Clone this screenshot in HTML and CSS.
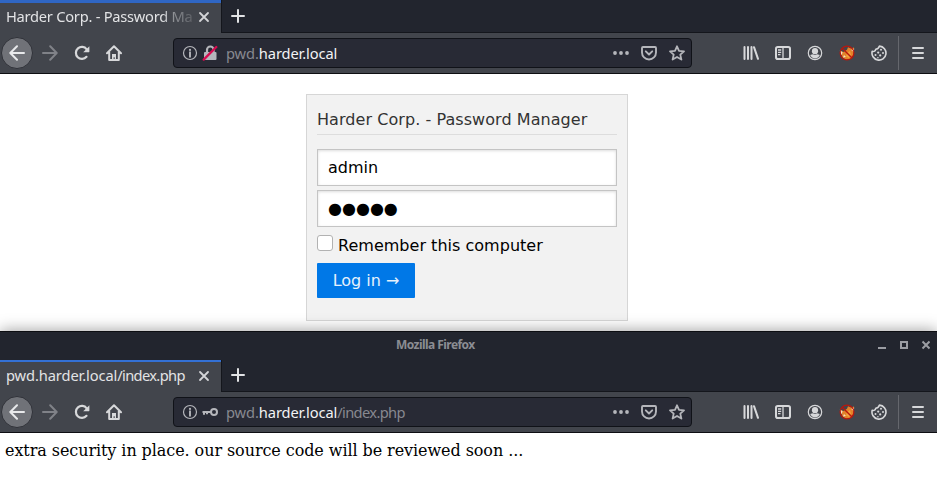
FILE: index.html
```html
<!DOCTYPE html>
<html lang="en">
<head>
<meta charset="utf-8">
<title>Harder Corp. - Password Manager</title>
<link rel="stylesheet" href="styles.css">
</head>
<body>
<svg class="sprite" aria-hidden="true">
  <symbol id="back" viewBox="0 0 16 16"><path d="M15 8H1.5M8 1.3 1.3 8 8 14.7" fill="none" stroke="currentColor" stroke-width="2" stroke-linecap="round" stroke-linejoin="round"/></symbol>
  <symbol id="forward" viewBox="0 0 16 16"><path d="M1 8h13.5M8.200 1.300 14.700 8 8.200 14.700" fill="none" stroke="currentColor" stroke-width="2" stroke-linecap="round" stroke-linejoin="round"/></symbol>
  <symbol id="reload" viewBox="0 0 16 16"><path d="M12.500 11.800A6 6 0 1 1 12.700 4.300" fill="none" stroke="currentColor" stroke-width="2.200" stroke-linecap="round"/><path d="M15.400 1.200v5.400a.6.6 0 0 1-.6.600H9.200z" fill="currentColor"/></symbol>
  <symbol id="home" viewBox="0 0 16 16"><path d="M1 8.300 8 1.300l7 7M3.200 7v8h9.600V7" fill="none" stroke="currentColor" stroke-width="2" stroke-linecap="round" stroke-linejoin="round"/><path d="M6 9h4v5H8.700v-1.700H7.600V14H6z" fill="currentColor"/></symbol>
  <symbol id="info" viewBox="0 0 16 16"><circle cx="8" cy="8" r="6.500" fill="none" stroke="currentColor" stroke-width="1.200"/><circle cx="8" cy="4.900" r="1.100" fill="currentColor"/><path d="M8 7.200v4.500" stroke="currentColor" stroke-width="1.900" stroke-linecap="round"/></symbol>
  <symbol id="lock" viewBox="0 0 16 16"><path d="M5 8V4.800a3.300 3.300 0 0 1 6.600 0V8" fill="none" stroke="currentColor" stroke-width="2.200"/><rect x="2" y="7" width="12.500" height="8" rx="1" fill="currentColor"/><path d="M1.700 14.600 14.300 2" stroke="#d70b50" stroke-width="2.300" stroke-linecap="round"/></symbol>
  <symbol id="key" viewBox="0 0 16 16"><circle cx="12" cy="8" r="3" fill="none" stroke="currentColor" stroke-width="2"/><path d="M9 8H.5M2 8v2.700M5 8v2.200" fill="none" stroke="currentColor" stroke-width="2"/></symbol>
  <symbol id="dots" viewBox="0 0 16 16"><g fill="currentColor"><circle cx="2" cy="8" r="1.900"/><circle cx="8" cy="8" r="1.900"/><circle cx="14" cy="8" r="1.900"/></g></symbol>
  <symbol id="pocket" viewBox="0 0 16 16"><path d="M2 2h12q1 0 1 1v4.500a7 7 0 0 1-14 0V3q0-1 1-1zM4.800 6.300 8 9.500l3.200-3.200" fill="none" stroke="currentColor" stroke-width="1.900" stroke-linecap="round" stroke-linejoin="round"/></symbol>
  <symbol id="star" viewBox="0 0 16 16"><path d="m8 1.300 2 4.500 5 .500-3.700 3.300 1.100 5L8 12l-4.400 2.600 1.100-5L1 6.300l5-.5z" fill="none" stroke="currentColor" stroke-width="1.800" stroke-linejoin="round"/></symbol>
  <symbol id="library" viewBox="0 0 16 16"><path d="M1.500 2v12M5 2v12M8.500 2v12M11 2.200l4 11.600" fill="none" stroke="currentColor" stroke-width="2" stroke-linecap="round"/></symbol>
  <symbol id="sidebar" viewBox="0 0 16 16"><rect x="1" y="2" width="14" height="12" rx="1.800" fill="none" stroke="currentColor" stroke-width="2"/><path d="M8 2v12M3 5h3.200M3 7.300h3.200M3 9.600h2.500" fill="none" stroke="currentColor" stroke-width="1.300"/></symbol>
  <symbol id="account" viewBox="0 0 16 16"><circle cx="8" cy="8" r="6.700" fill="none" stroke="currentColor" stroke-width="1.200"/><circle cx="8" cy="6.200" r="3.100" fill="currentColor"/><path d="M3.200 10q1.800-.7 2.800-.7 2 1.400 4 0 1 0 2.800.7-1.500 3.400-4.800 3.400T3.200 10z" fill="currentColor"/></symbol>
  <symbol id="fox" viewBox="0 0 16 16"><path d="M1 5.500 4.500 7 8 4.800l1-2.500 3 1.200 3-1-.5 7-2.300 4-5 1.200-3.700-2.400z" fill="#e3822a"/><path d="m.8 5.500 2.800 1.700-1 3zM15.200 3.500l-3 1.500 2.600 2zM5 10l2 2-3 .4z" fill="#f6dfc0"/><path d="m8 8 3-2 1 4-2 3-3-1.500z" fill="#f5a33c"/><circle cx="8" cy="8" r="6.900" fill="none" stroke="#b9160d" stroke-width="1.200"/><path d="m3.200 3.200 9.600 9.600" stroke="#b9160d" stroke-width="1.400"/></symbol>
  <symbol id="cookie" viewBox="0 0 16 16"><path d="M8.500 1.100a7 7 0 1 1-7.300 5.200q3 .700 3.500-2 2.800-.2 3.800-3.200z" fill="none" stroke="currentColor" stroke-width="1.600" stroke-linejoin="round"/><g fill="currentColor"><circle cx="10" cy="4.800" r="1"/><circle cx="7.200" cy="7.600" r="1.100"/><circle cx="12" cy="8" r="1"/><circle cx="4.500" cy="10" r="1"/><circle cx="9.200" cy="10.400" r="1.100"/><circle cx="6.900" cy="12.700" r=".8"/></g></symbol>
  <symbol id="menu" viewBox="0 0 16 16"><path d="M3 3h10M3 8h10M3 13h10" stroke="currentColor" stroke-width="2" stroke-linecap="round"/></symbol>
  <symbol id="close" viewBox="0 0 16 16"><path d="m4 4 8 8m0-8-8 8" stroke="currentColor" stroke-width="1.800" stroke-linecap="round"/></symbol>
  <symbol id="plus" viewBox="0 0 16 16"><path d="M8 2v12M2 8h12" stroke="currentColor" stroke-width="2" stroke-linecap="round"/></symbol>
</svg>

<section class="window window-login">
  <div class="tabs">
    <div class="tab"><span class="tab-title fade">Harder Corp. - Password Ma</span><svg class="icon"><use href="#close"/></svg></div>
    <div class="new-tab"><svg class="icon"><use href="#plus"/></svg></div>
  </div>
  <div class="toolbar">
    <div class="btn back"><svg class="icon"><use href="#back"/></svg></div>
    <div class="btn disabled"><svg class="icon"><use href="#forward"/></svg></div>
    <div class="btn"><svg class="icon"><use href="#reload"/></svg></div>
    <div class="btn"><svg class="icon"><use href="#home"/></svg></div>
    <div class="urlbar">
      <svg class="icon"><use href="#info"/></svg><svg class="icon lock"><use href="#lock"/></svg>
      <span class="url">pwd.<b>harder.local</b></span>
      <div class="act"><svg class="icon"><use href="#dots"/></svg></div>
      <div class="act"><svg class="icon"><use href="#pocket"/></svg></div>
      <div class="act"><svg class="icon"><use href="#star"/></svg></div>
    </div>
    <div class="tools">
      <div class="btn"><svg class="icon"><use href="#library"/></svg></div>
      <div class="btn"><svg class="icon"><use href="#sidebar"/></svg></div>
      <div class="btn"><svg class="icon"><use href="#account"/></svg></div>
      <div class="btn"><svg class="icon"><use href="#fox"/></svg></div>
      <div class="btn"><svg class="icon"><use href="#cookie"/></svg></div>
      <div class="sep"></div>
      <div class="btn"><svg class="icon"><use href="#menu"/></svg></div>
    </div>
  </div>
  <main class="page">
    <form class="login">
      <h1>Harder Corp. - Password Manager</h1>
      <input class="field" type="text" value="admin" aria-label="Username">
      <div class="field password">●●●●●</div>
      <label class="remember"><span class="check"></span>Remember this computer</label>
      <button class="submit" type="button">Log in →</button>
    </form>
  </main>
</section>

<section class="window window-index">
  <div class="titlebar">
    <span class="title">Mozilla Firefox</span>
    <svg class="controls" viewBox="0 0 52 10"><path d="M0 8h8" stroke="#9b9da3" stroke-width="2"/><path d="M23 2h6v6h-6z" fill="none" stroke="#9b9da3" stroke-width="2"/><path d="m44.500 1.500 7 7m0-7-7 7" stroke="#9b9da3" stroke-width="2"/></svg>
  </div>
  <div class="tabs">
    <div class="tab"><span class="tab-title">pwd.harder.local<span class="path">/index.php</span></span><svg class="icon"><use href="#close"/></svg></div>
    <div class="new-tab"><svg class="icon"><use href="#plus"/></svg></div>
  </div>
  <div class="toolbar">
    <div class="btn back"><svg class="icon"><use href="#back"/></svg></div>
    <div class="btn disabled"><svg class="icon"><use href="#forward"/></svg></div>
    <div class="btn"><svg class="icon"><use href="#reload"/></svg></div>
    <div class="btn"><svg class="icon"><use href="#home"/></svg></div>
    <div class="urlbar">
      <svg class="icon"><use href="#info"/></svg><svg class="icon lock"><use href="#key"/></svg>
      <span class="url">pwd.<b>harder.local</b><span class="path">/index.php</span></span>
      <div class="act"><svg class="icon"><use href="#dots"/></svg></div>
      <div class="act"><svg class="icon"><use href="#pocket"/></svg></div>
      <div class="act"><svg class="icon"><use href="#star"/></svg></div>
    </div>
    <div class="tools">
      <div class="btn"><svg class="icon"><use href="#library"/></svg></div>
      <div class="btn"><svg class="icon"><use href="#sidebar"/></svg></div>
      <div class="btn"><svg class="icon"><use href="#account"/></svg></div>
      <div class="btn"><svg class="icon"><use href="#fox"/></svg></div>
      <div class="btn"><svg class="icon"><use href="#cookie"/></svg></div>
      <div class="sep"></div>
      <div class="btn"><svg class="icon"><use href="#menu"/></svg></div>
    </div>
  </div>
  <p class="message">extra security in place. our source code will be reviewed soon ...</p>
</section>
</body>
</html>
```
FILE: styles.css
```css
* { box-sizing: border-box; }
body { margin: 0; height: 504px; overflow: hidden; background: #fff; font-family: "Noto Sans", sans-serif; }
.sprite { display: none; }
.icon { width: 16px; height: 16px; flex: none; display: block; }

.window { display: flex; flex-direction: column; background: #fff; }
.window-login { height: 331px; }
.window-index { height: 173px; position: relative; border-top: 1px solid #0d0e12; box-shadow: 0 -1px 14px rgba(0, 0, 0, .36); }

.titlebar { height: 28px; flex: none; background: #22252e; display: flex; align-items: center; padding: 0 6px 2px 396px; justify-content: space-between; }
.title { margin-bottom: 2px; font-size: 12px; font-weight: 700; color: #8b8d93; letter-spacing: -.55px; }
.controls { width: 52px; height: 10px; margin-right: 1px; }

.tabs { height: 33px; flex: none; background: #22252e; display: flex; border-bottom: 1px solid #14161c; }
.window-index .tabs { height: 32px; }
.tab { width: 221px; height: 32px; margin-bottom: -1px; padding: 0 9px 2px 6px; display: flex; align-items: center; justify-content: space-between; background: #42454c; border-top: 2px solid #3370d4; color: #e2e3e5; box-shadow: 1px 0 #14161c; }
.window-login .tab { height: 33px; padding-bottom: 3px; border-top: 3px solid #2f66c4; }
.tab-title { width: 189px; margin-bottom: 2px; white-space: nowrap; font-size: 14.670px; line-height: 22px; letter-spacing: -.1px; }
.fade { letter-spacing: -.25px; -webkit-mask-image: linear-gradient(90deg, #000 156px, rgba(0,0,0,.5) 166px, rgba(0,0,0,.12) 189px); mask-image: linear-gradient(90deg, #000 156px, rgba(0,0,0,.5) 166px, rgba(0,0,0,.12) 189px); }
.tab .icon { color: #d4d5d8; }
.new-tab { padding: 8px 0 0 9px; color: #e2e3e5; }
.window-index .new-tab { padding-top: 7px; }

.toolbar { height: 41px; flex: none; display: flex; align-items: center; padding: 0 3px 0 1px; background: #42454c; border-bottom: 1px solid #0d0e12; color: #d7d8da; }
.btn { width: 32px; height: 32px; flex: none; display: flex; align-items: center; justify-content: center; }
.back { border-radius: 50%; background: #707278; border: 1px solid #303239; margin-right: 1px; color: #e8e9eb; }
.disabled { color: #808288; }
.urlbar { width: 519px; height: 30px; margin-left: 43px; padding-left: 8px; display: flex; align-items: center; background: #282a35; border: 1px solid #101218; border-radius: 4px; color: #b5b6bb; }
.lock { margin-left: 4px; }
.url { flex: 1; margin-left: 8px; font-size: 14.670px; line-height: 22px; letter-spacing: -.1px; color: #878890; }
.url b { font-weight: 400; color: #f2f2f4; }
.path { letter-spacing: -.65px; }
.act { width: 28px; display: flex; justify-content: center; }
.tools { margin-left: auto; display: flex; align-items: center; }
.sep { width: 1px; height: 34px; margin: 0 3px; background: #65676d; }

.page { flex: 1; padding-top: 20px; font-family: "DejaVu Sans", sans-serif; font-size: 16px; }
.login { width: 322px; height: 227px; margin: 0 0 0 306px; padding: 10px; background: #f2f2f2; border: 1px solid #d6d6d6; display: flex; flex-direction: column; align-items: flex-start; }
.login h1 { width: 100%; height: 30px; margin: 0 0 14px; padding-top: 5px; border-bottom: 1px solid #ddd; font-size: 16px; font-weight: 400; line-height: 19px; letter-spacing: .06px; color: #333; }
.field { width: 300px; height: 37px; flex: none; margin: 0 0 4px; padding: 0 10px; border: 1px solid #c4c4c4; background: #fff; box-shadow: inset 0 1px 3px #ddd; font: 16px/35px "DejaVu Sans", sans-serif; color: #000; }
.remember { display: flex; align-items: flex-start; margin-top: 4px; height: 20px; line-height: 22px; letter-spacing: .02px; color: #000; }
.check { width: 16px; height: 16px; margin-right: 5px; border: 1px solid #b2b2b2; border-radius: 3px; background: #fff; }
.submit { width: 98px; height: 35px; margin-top: 8px; padding: 0; border: 0; border-radius: 1px; background: #0078e7; color: #e6f1fc; font: 16px "DejaVu Sans", sans-serif; }

.message { margin: 8px 0 0 5px; font: 16px/19px "DejaVu Serif", serif; letter-spacing: -.075px; color: #000; }
```
